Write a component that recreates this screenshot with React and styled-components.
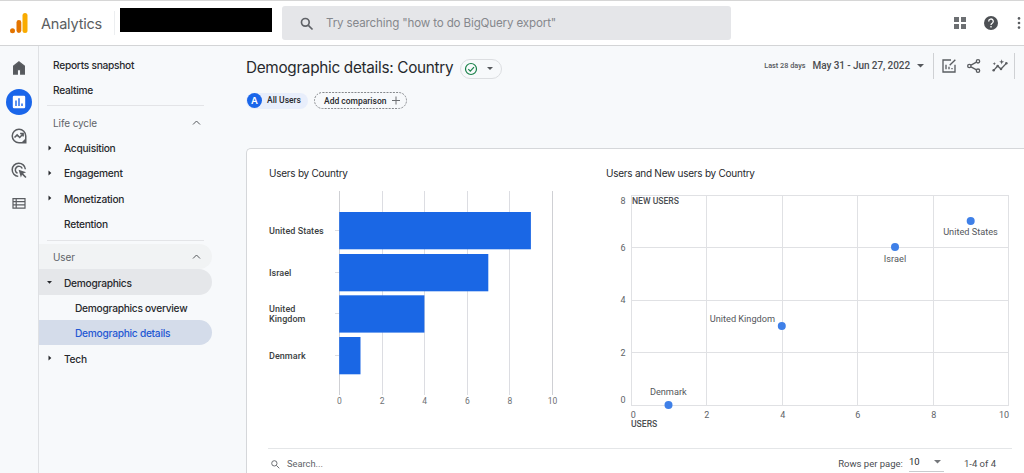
import React from "react";
import styled, { createGlobalStyle } from "styled-components";

const Global = createGlobalStyle`
  * { box-sizing: border-box; }
  html, body { margin: 0; padding: 0; overflow: hidden; background: #f7f9fb; }
  body { font-family: Inter, "Liberation Sans", sans-serif; color: #27292d; }
`;

const Page = styled.div`
  display: flex;
  flex-direction: column;
  width: 1024px;
  height: 473px;
  overflow: hidden;
`;

const Header = styled.header`
  display: flex;
  align-items: center;
  flex: none;
  height: 46px;
  background: #fff;
  border-top: 1px solid #d6d6d6;
  border-bottom: 1px solid #d3d4d6;
`;

const Label = styled.span`
  font-family: ${(p) => p.$font || "inherit"};
  font-size: ${(p) => p.$size || 10}px;
  font-weight: ${(p) => p.$weight || 400};
  letter-spacing: ${(p) => p.$track || 0}px;
  color: ${(p) => p.$color || "inherit"};
  line-height: 1.2;
  white-space: nowrap;
`;

const NavLabel = styled(Label)`
  font-size: 10.2px;
  font-weight: 500;
  letter-spacing: -0.27px;
`;

const Logo = styled.svg`
  margin-left: 9px;
  width: 20px;
  height: 22px;
  flex: none;
`;

const Brand = styled.div`
  display: flex;
  align-items: center;
  width: 74px;
  height: 24px;
  margin-left: 12px;
  padding-top: 1px;
  border-right: 1px solid #eceef0;
`;

const Redacted = styled.div`
  width: 152px;
  height: 24px;
  margin: -6px 0 0 5px;
  background: #000;
`;

const SearchBox = styled.div`
  display: flex;
  align-items: center;
  gap: 11px;
  width: 449px;
  height: 34px;
  margin-left: 10px;
  padding: 1px 0 0 17px;
  border-radius: 3px;
  background: #e5e6e9;
`;

const HeaderActions = styled.div`
  display: flex;
  align-items: center;
  gap: 16px;
  margin-left: 222px;
`;

const Body = styled.div`
  display: flex;
  flex: 1;
  min-height: 0;
`;

const Rail = styled.aside`
  display: flex;
  flex-direction: column;
  align-items: center;
  gap: 8px;
  flex: none;
  width: 39px;
  padding: 9px 1px 0 0;
  border-right: 1px solid #dfe1e4;
`;

const RailItem = styled.div`
  display: grid;
  place-items: center;
  width: 26px;
  height: 26px;
  border-radius: 50%;
  background: ${(p) => (p.$active ? "#1a66ea" : "transparent")};
`;

const Nav = styled.nav`
  display: flex;
  flex-direction: column;
  flex: none;
  width: 173px;
  padding-top: 5.5px;
`;

const NavRow = styled.div`
  display: flex;
  align-items: center;
  flex: none;
  height: 25.3px;
  padding: 1.5px 11px 0 ${(p) => p.$indent}px;
  border-radius: 0 13px 13px 0;
  background: ${(p) => p.$bg || "transparent"};
`;

const Caret = styled.svg`
  width: 7px;
  height: 7px;
  margin-right: 11px;
  flex: none;
`;

const Chevron = styled.svg`
  width: 9px;
  height: 9px;
  margin: -1px 0 0 auto;
`;

const NavRule = styled.div`
  flex: none;
  height: 1px;
  margin: ${(p) => p.$margin};
  background: #e3e4e7;
`;

const NavFoot = styled.div`
  margin: auto 0 -11px 11px;
  line-height: 13px;
`;

const Main = styled.main`
  display: flex;
  flex-direction: column;
  flex: 1;
  min-width: 0;
  padding-left: 34px;
`;

const TitleBar = styled.div`
  display: flex;
  align-items: center;
  flex: none;
  height: 39px;
  margin-top: 3px;
`;

const StatusPill = styled.div`
  display: flex;
  align-items: center;
  gap: 9px;
  width: 42px;
  height: 20px;
  margin-left: auto;
  padding-left: 3px;
  border: 1px solid #dcdee1;
  border-radius: 10px;
`;

const Heading = styled.div`
  display: flex;
  align-items: center;
  width: 256px;
`;

const Tools = styled.div`
  display: flex;
  align-items: center;
  gap: 6.5px;
  margin: -5px 9px 0 auto;
`;

const ToolIcons = styled.div`
  display: flex;
  align-items: center;
  gap: 9.5px;
`;

const DateRange = styled.div`
  display: flex;
  align-items: center;
  gap: 7px;
  margin-right: 2.5px;
`;

const Divider = styled.div`
  width: 1px;
  height: 26px;
  background: #cfd1d4;
`;

const Comparisons = styled.div`
  display: flex;
  align-items: center;
  flex: none;
  gap: 6px;
  height: 17px;
  margin-top: 4px;
`;

const UserChip = styled.div`
  display: flex;
  align-items: center;
  gap: 5px;
  width: 62px;
  height: 16px;
  padding-left: 1px;
  border-radius: 8px;
  background: #e8eefb;
`;

const Avatar = styled.div`
  display: grid;
  place-items: center;
  width: 15px;
  height: 15px;
  border-radius: 50%;
  background: #1a66ea;
`;

const AddChip = styled.svg`
  width: 93px;
  height: 17px;
`;

const Card = styled.section`
  display: flex;
  flex-direction: column;
  flex: 1;
  min-height: 0;
  margin-top: 39px;
  padding: 17px 0 0 22px;
  border: 1px solid #d5d7da;
  border-right: 0;
  border-bottom: 0;
  border-radius: 5px 0 0 0;
  background: #fff;
`;

const Charts = styled.div`
  display: grid;
  flex: none;
  grid-template-columns: 337px 1fr;
`;

const ChartPanel = styled.div`
  display: flex;
  flex-direction: column;
`;

const ChartTitle = styled.h2`
  display: flex;
  align-items: center;
  height: 14px;
  margin: 0 0 5px;
  font-weight: 400;
`;

const Plot = styled.svg`
  display: block;
  height: 250px;
  overflow: visible;
  font-family: Roboto, sans-serif;
`;

const TableBar = styled.div`
  display: flex;
  align-items: center;
  flex: none;
  height: 31px;
  width: 744px;
  margin: 13px 0 0 -1px;
  padding: 0 16px 0 2px;
  border-top: 1px solid #e4e6e8;
`;

const SearchField = styled.div`
  display: flex;
  align-items: center;
  gap: 6px;
  margin-right: auto;
`;

const PageSize = styled.div`
  display: flex;
  align-items: center;
  justify-content: space-between;
  width: 35px;
  height: 18px;
  margin: -3px 20px 0 6px;
  padding-right: 3px;
  border-bottom: 1px solid #c9cbce;
`;

const R = "Roboto, sans-serif";

const Icon = ({ size = 18, color = "#5a5d61", children, box = 24 }) => (
  <svg width={size} height={size} viewBox={`0 0 ${box} ${box}`} fill="none" stroke={color} strokeWidth="2">
    {children}
  </svg>
);

const DropArrow = ({ size = 7, color = "#55585c" }) => (
  <svg width={size} height={size / 2} viewBox="0 0 8 4"><path d="M0 0h8L4 4z" fill={color} /></svg>
);

const SearchGlyph = ({ size, color, width = 2 }) => (
  <Icon size={size} color={color}>
    <circle cx="9.5" cy="9.5" r="5.8" strokeWidth={width} />
    <path d="M14 14l6.3 6.3" strokeWidth={width} />
  </Icon>
);

const navItems = [
  { text: "Acquisition", arrow: "right" },
  { text: "Engagement", arrow: "right" },
  { text: "Monetization", arrow: "right" },
  { text: "Retention" },
];

const NavEntry = ({ text, arrow, bg }) => (
  <NavRow $indent={7} $bg={bg}>
    <Caret viewBox="0 0 7 7">
      {arrow === "right" && <path d="M2.5 0.5v5l2.8-2.5z" fill="#27292d" />}
      {arrow === "down" && <path d="M1 2h5L3.5 4.800z" fill="#27292d" />}
    </Caret>
    <NavLabel>{text}</NavLabel>
  </NavRow>
);

const Section = ({ text, bg }) => (
  <NavRow $indent={14} $bg={bg}>
    <Label $color="#606368" $track={-0.1}>{text}</Label>
    <Chevron viewBox="0 0 9 9"><path d="M1 6.5l3.5-3.5L8 6.5" fill="none" stroke="#55585c" strokeWidth="1" /></Chevron>
  </NavRow>
);

const bars = [
  { lines: ["United States"], value: 9, y: 27, label: 49 },
  { lines: ["Israel"], value: 7, y: 69, label: 91 },
  { lines: ["United", "Kingdom"], value: 4, y: 110.3, label: 127 },
  { lines: ["Denmark"], value: 1, y: 152, label: 174 },
];

const BarChart = () => (
  <Plot width="320">
    {[0, 2, 4, 6, 8, 10].map((v) => (
      <g key={v}>
        <rect x={Math.round(70 + v * 21.3)} y="6" width="1" height="204" fill={v % 10 ? "#dcdde2" : "#cfd0d4"} />
        <text x={70.5 + v * 21.3} y="219" fontSize="8.5" fill="#6d7074" textAnchor="middle">{v}</text>
      </g>
    ))}
    {bars.map((b) => (
      <g key={b.y}>
        <rect x="66" y={Math.round(b.y + 18)} width="4" height="1" fill="#dcdde2" />
        <rect x="70.2" y={b.y} width={b.value * 21.3} height="37.3" fill="#1a67e5" />
        {b.lines.map((line, i) => (
          <text key={line} x="0" y={b.label + i * 10} fontSize="9" fontWeight="500" letterSpacing="0.05" fill="#3c3f43">{line}</text>
        ))}
      </g>
    ))}
  </Plot>
);

const points = [
  { name: "Denmark", cx: 62.5, cy: 220, tx: 62.3, ty: 210 },
  { name: "United Kingdom", cx: 175.8, cy: 141, tx: 136.4, ty: 136.5 },
  { name: "Israel", cx: 289, cy: 62, tx: 289, ty: 77 },
  { name: "United States", cx: 364.7, cy: 36, tx: 364.5, ty: 50 },
];

const ScatterChart = () => (
  <Plot width="418">
    {[25, 100, 176, 251, 327, 402].map((x, i) => (
      <g key={x}>
        <rect x={x} y="10" width="1" height="211" fill="#e0e1e4" />
        <text x={i === 0 ? 27.3 : i === 5 ? 398 : x + 0.8} y="233" fontSize="9" fill="#606368" textAnchor="middle">{i * 2}</text>
      </g>
    ))}
    {[10, 62, 115, 167, 220].map((y, i) => (
      <g key={y}>
        <rect x="25" y={y} width="378" height="1" fill="#e0e1e4" />
        <text x="17" y={[18.5, 65.5, 118, 171, 217.5][i]} fontSize="9" fill="#606368" textAnchor="middle">{8 - i * 2}</text>
      </g>
    ))}
    <text x="26" y="18.5" fontSize="8.6" fontWeight="500" fill="#4b4e52">NEW USERS</text>
    <text x="25" y="241.5" fontSize="8.6" fontWeight="500" fill="#4b4e52">USERS</text>
    {points.map((p) => (
      <g key={p.name}>
        <circle cx={p.cx} cy={p.cy} r="4" fill="#3f80e8" />
        <text x={p.tx} y={p.ty} fontSize="9.2" fill="#55585c" textAnchor="middle">{p.name}</text>
      </g>
    ))}
  </Plot>
);

export default function App() {
  return (
    <Page>
      <Global />
      <Header>
        <Logo viewBox="0 0 20 22">
          <rect x="13.5" y="1" width="5" height="20" rx="2.5" fill="#f9ab00" />
          <rect x="7.5" y="8" width="4.8" height="13" rx="2.4" fill="#e37400" />
          <circle cx="3.5" cy="18.7" r="2.5" fill="#e37400" />
        </Logo>
        <Brand><Label $size={14.5} $track={-0.2} $color="#5a5d61">Analytics</Label></Brand>
        <Redacted />
        <SearchBox>
          <SearchGlyph size={16} color="#5f6267" width={2.5} />
          <Label $size={11.6} $track={-0.15} $color="#85888d">Try searching "how to do BigQuery export"</Label>
        </SearchBox>
        <HeaderActions>
          <svg width="14" height="14" viewBox="0 0 14 14" fill="#6c6f72">
            <path d="M1 1h5v5H1zM8 1h5v5H8zM1 8h5v5H1zM8 8h5v5H8z" />
          </svg>
          <svg width="16" height="16" viewBox="0 0 16 16">
            <circle cx="8" cy="8" r="7" fill="#4d5054" />
            <path d="M5.7 6.5a2.3 2.3 0 1 1 3.5 1.8C8.4 8.8 8 9.1 8 9.9M8 11v1.4" fill="none" stroke="#fff" strokeWidth="1.3" />
          </svg>
          <svg width="8" height="14" viewBox="0 0 8 14" fill="#5a5d61">
            <circle cx="4" cy="2.4" r="1.3" /><circle cx="4" cy="7" r="1.3" /><circle cx="4" cy="11.6" r="1.3" />
          </svg>
        </HeaderActions>
      </Header>
      <Body>
        <Rail>
          <RailItem>
            <Icon size={18}><path d="M12 4l7 5.5V20h-4.6v-6H9.6v6H5V9.5z" fill="#55585c" /></Icon>
          </RailItem>
          <RailItem $active>
            <svg width="14" height="14" viewBox="0 0 14 14">
              <rect x="0.8" y="0.8" width="12.4" height="12.4" rx="1.2" fill="#fff" />
              <path d="M4 5.6V11M7 3.3V11M10 8.4V11" stroke="#1a66ea" strokeWidth="1.4" />
            </svg>
          </RailItem>
          <RailItem>
            <Icon size={18}>
              <path d="M21 12v9h-9a9 9 0 1 1 9-9z" />
              <path d="M21 15v6h-6z" fill="#5a5d61" stroke="none" />
              <path d="M6 14l3.500-3.500 3.500 3.500 4.500-5M13.500 8.500h4v4" />
            </Icon>
          </RailItem>
          <RailItem>
            <Icon size={18}>
              <path d="M11 20.500A8.800 8.800 0 1 1 20.500 11M10 16.300A4.800 4.800 0 1 1 16.300 10" />
              <path d="M11.500 11.500l10 3.500-4 1.800 4.500 4.500-1.500 1.500-4.500-4.500-1.500 3.700z" fill="#5a5d61" stroke="none" />
            </Icon>
          </RailItem>
          <RailItem>
            <svg width="14" height="12" viewBox="0 0 14 12" fill="none" stroke="#5a5d61" strokeWidth="1.200">
              <path d="M1 0.600h12v9.500H1zM1 3.700h12M1 6.900h12M4.200 0.600v9.500" />
            </svg>
          </RailItem>
        </Rail>
        <Nav>
          <NavRow $indent={14}><NavLabel>Reports snapshot</NavLabel></NavRow>
          <NavRow $indent={14}><NavLabel>Realtime</NavLabel></NavRow>
          <NavRule $margin="3px 8px 3.500px" />
          <Section text="Life cycle" />
          {navItems.map((n) => <NavEntry key={n.text} {...n} />)}
          <NavRule $margin="4px 8px 3px" />
          <Section text="User" bg="#f1f3f4" />
          <NavEntry text="Demographics" arrow="down" bg="#e5e7ea" />
          <NavRow $indent={36}><NavLabel>Demographics overview</NavLabel></NavRow>
          <NavRow $indent={36} $bg="#d4dcea"><NavLabel $color="#2458d3">Demographic details</NavLabel></NavRow>
          <NavEntry text="Tech" arrow="right" />
          <NavFoot><NavLabel>Events</NavLabel></NavFoot>
        </Nav>
        <Main>
          <TitleBar>
            <Heading>
              <Label $size={15.300} $track={-0.3}>Demographic details: Country</Label>
              <StatusPill>
                <svg width="14" height="14" viewBox="0 0 14 14" fill="none" stroke="#188048" strokeWidth="1.200">
                  <circle cx="7" cy="7" r="5.500" /><path d="M4.300 7.200l2 2 3.700-4" />
                </svg>
                <DropArrow size={6} />
              </StatusPill>
            </Heading>
            <Tools>
              <DateRange>
                <Label $size={7.300} $weight={500} $font={R} $color="#55585c">Last 28 days</Label>
                <Label $size={10} $weight={500} $font={R} $color="#4a4d51" $track={-0.08}>May 31 - Jun 27, 2022</Label>
                <DropArrow size={7} />
              </DateRange>
              <Divider />
              <ToolIcons>
                <Icon size={16}>
                  <path d="M15 3H3v18h18V10M7.500 17v-7M12 17v-4M16.500 17v-2M13 11l8.500-8.500" />
                </Icon>
                <Icon size={16}>
                  <circle cx="18" cy="5" r="2.500" /><circle cx="5" cy="12" r="2.500" /><circle cx="18" cy="19" r="2.500" />
                  <path d="M7.500 10.700L15.700 6.300M7.500 13.300l8.200 4.400" />
                </Icon>
                <Icon size={16}>
                  <path d="M2.500 18.500l6-6.500 5 4.500 8-8.500" />
                  <g fill="#5a5d61" stroke="none">
                    <circle cx="2.500" cy="18.500" r="1.900" /><circle cx="8.500" cy="12" r="1.900" />
                    <circle cx="13.500" cy="16.500" r="1.900" /><circle cx="21.500" cy="8" r="1.900" />
                    <path d="M14.500 2l1 2.800 2.800 1-2.800 1-1 2.800-1-2.800-2.800-1 2.800-1zM3.500 6l.7 1.800 1.800.7-1.800.7-.7 1.800-.7-1.800L1 8.500l1.800-.7z" />
                  </g>
                </Icon>
              </ToolIcons>
              <Divider />
            </Tools>
          </TitleBar>
          <Comparisons>
            <UserChip>
              <Avatar><Label $size={9.500} $weight={600} $color="#fff">A</Label></Avatar>
              <Label $size={8.500} $weight={500} $font={R}>All Users</Label>
            </UserChip>
            <AddChip viewBox="0 0 93 17">
              <rect x="0.500" y="0.500" width="92" height="16" rx="8" fill="none" stroke="#85888c" strokeDasharray="2 1.200" />
              <text x="10" y="11.600" fontFamily="Roboto" fontWeight="500" fontSize="8.500" fill="#27292d">Add comparison</text>
              <path d="M78 8.500h8M82 4.500v8" stroke="#6c6f72" />
            </AddChip>
          </Comparisons>
          <Card>
            <Charts>
              <ChartPanel>
                <ChartTitle><Label $track={-0.25}>Users by Country</Label></ChartTitle>
                <BarChart />
              </ChartPanel>
              <ChartPanel>
                <ChartTitle><Label $track={-0.25}>Users and New users by Country</Label></ChartTitle>
                <ScatterChart />
              </ChartPanel>
            </Charts>
            <TableBar>
              <SearchField>
                <SearchGlyph size={11} color="#606368" />
                <Label $size={9.300} $font={R} $color="#606368">Search...</Label>
              </SearchField>
              <Label $size={9.500} $font={R} $color="#4a4d51">Rows per page:</Label>
              <PageSize>
                <Label $size={9.500} $font={R}>10</Label>
                <DropArrow size={7} color="#74777b" />
              </PageSize>
              <Label $size={9.500} $font={R} $color="#4a4d51">1-4 of 4</Label>
            </TableBar>
          </Card>
        </Main>
      </Body>
    </Page>
  );
}
